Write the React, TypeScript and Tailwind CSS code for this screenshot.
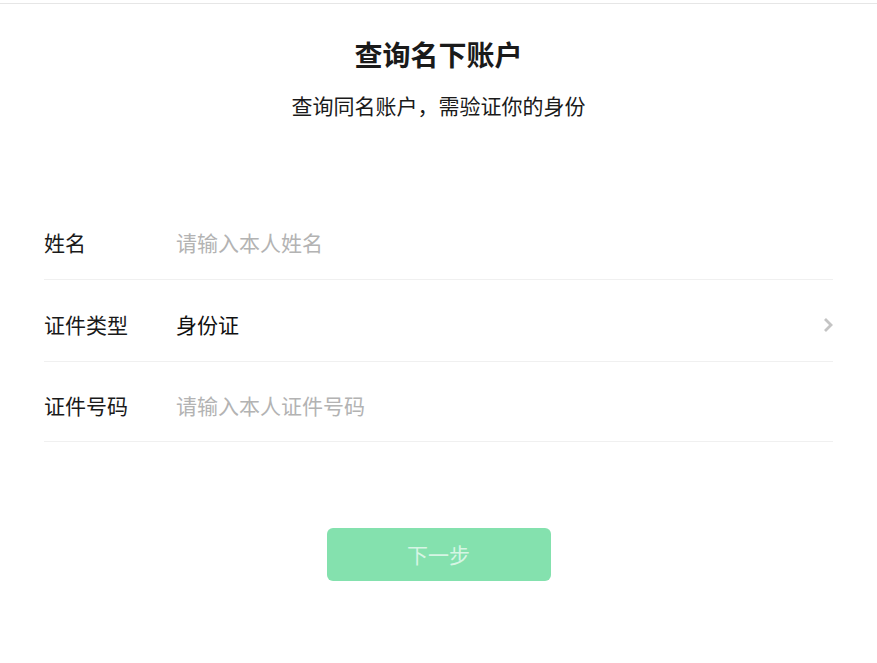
export default function App() {
  const font = { fontFamily: '"Noto Sans CJK SC", "Noto Sans", sans-serif' };

  return (
    <div className="min-h-[663px] w-[877px] bg-white pt-[3px]" style={font}>
      <div className="border-t border-[#e6e6e6]">
        <div className="flex flex-col items-center pt-[30px]">
          <h1 className="text-[28px] leading-[40px] font-bold text-[#1a1a1a]">查询名下账户</h1>
          <p className="mt-[16px] text-[21px] leading-[30px] text-[#1a1a1a]">查询同名账户，需验证你的身份</p>
        </div>

        <div className="mx-[44px] mt-[79px]">
          <div className="flex h-[81px] items-center border-b border-[#f0f0f0] pt-[8px]">
            <span className="w-[132px] text-[21px] text-[#1a1a1a]">姓名</span>
            <span className="text-[21px] text-[#b3b3b3]">请输入本人姓名</span>
          </div>
          <div className="flex h-[82px] items-center border-b border-[#f0f0f0] pt-[9px]">
            <span className="w-[132px] text-[21px] text-[#1a1a1a]">证件类型</span>
            <span className="flex-1 text-[21px] text-[#111]">身份证</span>
            <svg width="12" height="16" viewBox="0 0 12 16" className="mr-[-1px]">
              <path d="M3 2 L9 8 L3 14" fill="none" stroke="#c4c4c4" strokeWidth="2.8" />
            </svg>
          </div>
          <div className="flex h-[80px] items-center border-b border-[#f0f0f0] pt-[9px]">
            <span className="w-[132px] text-[21px] text-[#1a1a1a]">证件号码</span>
            <span className="text-[21px] text-[#b3b3b3]">请输入本人证件号码</span>
          </div>
        </div>

        <div className="mt-[86px] flex justify-center">
          <button className="flex h-[53px] w-[224px] items-center justify-center rounded-[6px] bg-[#84e1ae] text-[21px] text-[#d6f5e4]">
            下一步
          </button>
        </div>
      </div>
    </div>
  );
}
